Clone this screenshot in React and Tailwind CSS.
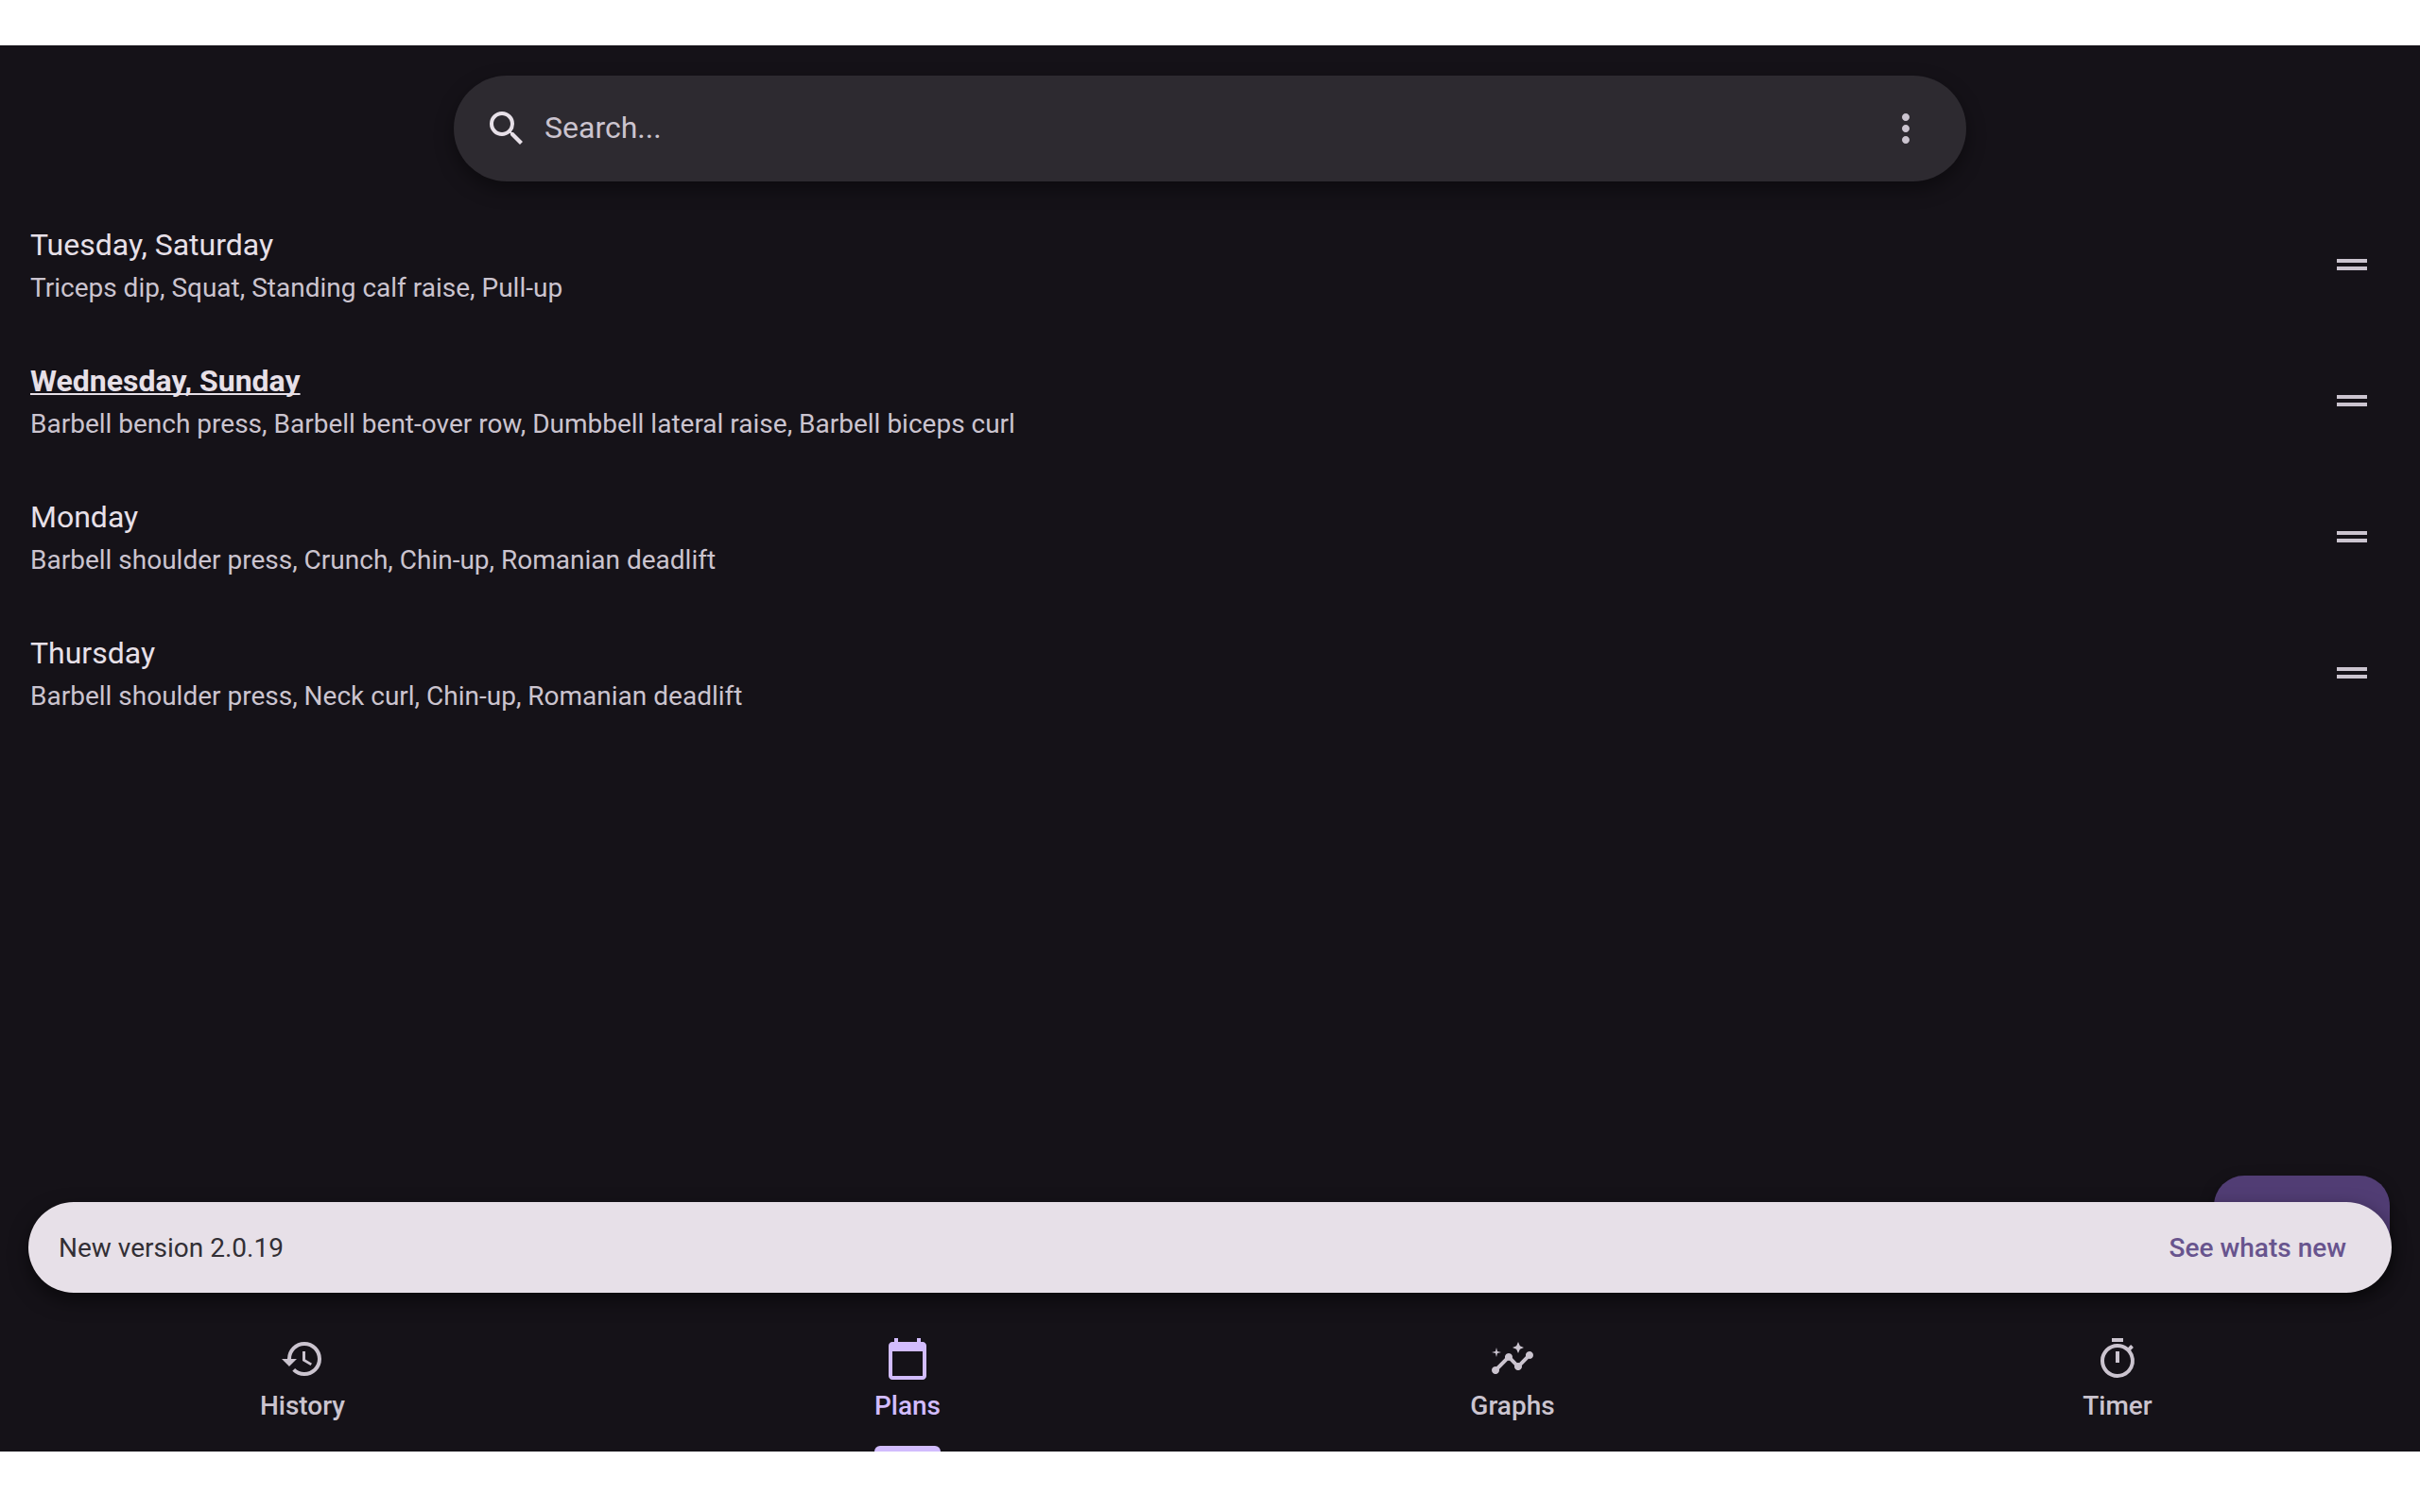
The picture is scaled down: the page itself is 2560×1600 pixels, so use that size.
import React, { useState } from 'react';
import {
  MdCalendarToday,
  MdDragHandle,
  MdHistory,
  MdInsights,
  MdMoreVert,
  MdOutlineTimer,
  MdSearch,
} from 'react-icons/md';

const PLANS = [
  {
    days: 'Tuesday, Saturday',
    exercises: 'Triceps dip, Squat, Standing calf raise, Pull-up',
  },
  {
    days: 'Wednesday, Sunday',
    exercises: 'Barbell bench press, Barbell bent-over row, Dumbbell lateral raise, Barbell biceps curl',
    today: true,
  },
  {
    days: 'Monday',
    exercises: 'Barbell shoulder press, Crunch, Chin-up, Romanian deadlift',
  },
  {
    days: 'Thursday',
    exercises: 'Barbell shoulder press, Neck curl, Chin-up, Romanian deadlift',
  },
];

const TABS = [
  { name: 'History', icon: <MdHistory /> },
  { name: 'Plans', icon: <MdCalendarToday /> },
  { name: 'Graphs', icon: <MdInsights /> },
  { name: 'Timer', icon: <MdOutlineTimer /> },
];

const SearchBar = () => {
  const [query, setQuery] = useState('');

  return (
    <div className="mx-auto flex h-28 w-full max-w-[1600px] items-center rounded-full bg-[#2d2a30] px-8 shadow-[0_8px_20px_rgba(0,0,0,0.4)]">
      <label htmlFor="search" className="text-5xl text-[#e7e0e8]">
        <MdSearch />
      </label>
      <input
        id="search"
        type="text"
        aria-label="Search"
        placeholder="Search..."
        value={query}
        onChange={(e) => setQuery(e.target.value)}
        className="mx-4 min-w-0 flex-1 bg-transparent pb-0.5 text-[32px] leading-[48px] text-[#e7e0e8] outline-none placeholder:text-[#cbc4cf]"
      />
      <button type="button" aria-label="Show menu" className="p-2 text-5xl text-[#cbc4cf]">
        <MdMoreVert />
      </button>
    </div>
  );
};

const PlanTile = ({ days, exercises, today }) => (
  <li className="flex h-36 items-center justify-between pl-8 pr-12">
    <div>
      <h2
        className={
          today
            ? 'text-[32px] leading-[48px] font-bold text-[#e7e0e8] underline decoration-2 underline-offset-2 [text-decoration-skip-ink:none]'
            : 'text-[32px] leading-[48px] text-[#e7e0e8]'
        }
      >
        {days}
      </h2>
      <p className="mt-0.5 text-[28px] leading-10 text-[#cbc4cf]">{exercises}</p>
    </div>
    <button type="button" aria-label={`Reorder ${days}`} className="text-5xl text-[#cbc4cf]">
      <MdDragHandle />
    </button>
  </li>
);

const Snackbar = () => (
  <div
    role="status"
    className="absolute inset-x-[30px] bottom-6 flex h-24 items-center justify-between rounded-full bg-[#e7e0e8] pt-0.5 pr-12 pl-8 text-[28px] leading-10 shadow-[0_8px_20px_rgba(0,0,0,0.5)]"
  >
    <span className="text-[#322f35]">New version 2.0.19</span>
    <button type="button" className="font-medium text-[#68548e]">
      See whats new
    </button>
  </div>
);

const Tab = ({ name, icon, active, onClick }) => (
  <button
    type="button"
    onClick={onClick}
    aria-current={active ? 'page' : undefined}
    className={`flex flex-1 justify-center ${active ? 'text-[#d2bcfe]' : 'text-[#cbc4cf]'}`}
  >
    <span className="flex flex-col items-center">
      <span className="text-5xl">{icon}</span>
      <span className="mt-[6px] text-[28px] leading-10 font-medium">{name}</span>
      {active && <span className="mt-[22px] h-[6px] w-full rounded-t-[6px] bg-[#d2bcfe]" />}
    </span>
  </button>
);

export default function App() {
  const [tab, setTab] = useState('Plans');

  return (
    <div className="flex min-h-screen flex-col bg-white pt-12 pb-16 font-['Roboto',sans-serif]">
      <div className="flex flex-1 flex-col bg-[#151218]">
        <main className="relative flex-1">
          <div className="px-8 pt-8 pb-4">
            <SearchBar />
          </div>
          <ul>
            {PLANS.map((plan) => (
              <PlanTile key={plan.days} {...plan} />
            ))}
          </ul>
          <button
            type="button"
            aria-label="Add"
            className="absolute right-8 bottom-9 h-28 w-[186px] rounded-[32px] bg-[#513d74] shadow-[0_6px_16px_rgba(0,0,0,0.4)]"
          />
          <Snackbar />
        </main>
        <nav className="flex h-36 pt-[22px]">
          {TABS.map(({ name, icon }) => (
            <Tab key={name} name={name} icon={icon} active={name === tab} onClick={() => setTab(name)} />
          ))}
        </nav>
      </div>
    </div>
  );
}
